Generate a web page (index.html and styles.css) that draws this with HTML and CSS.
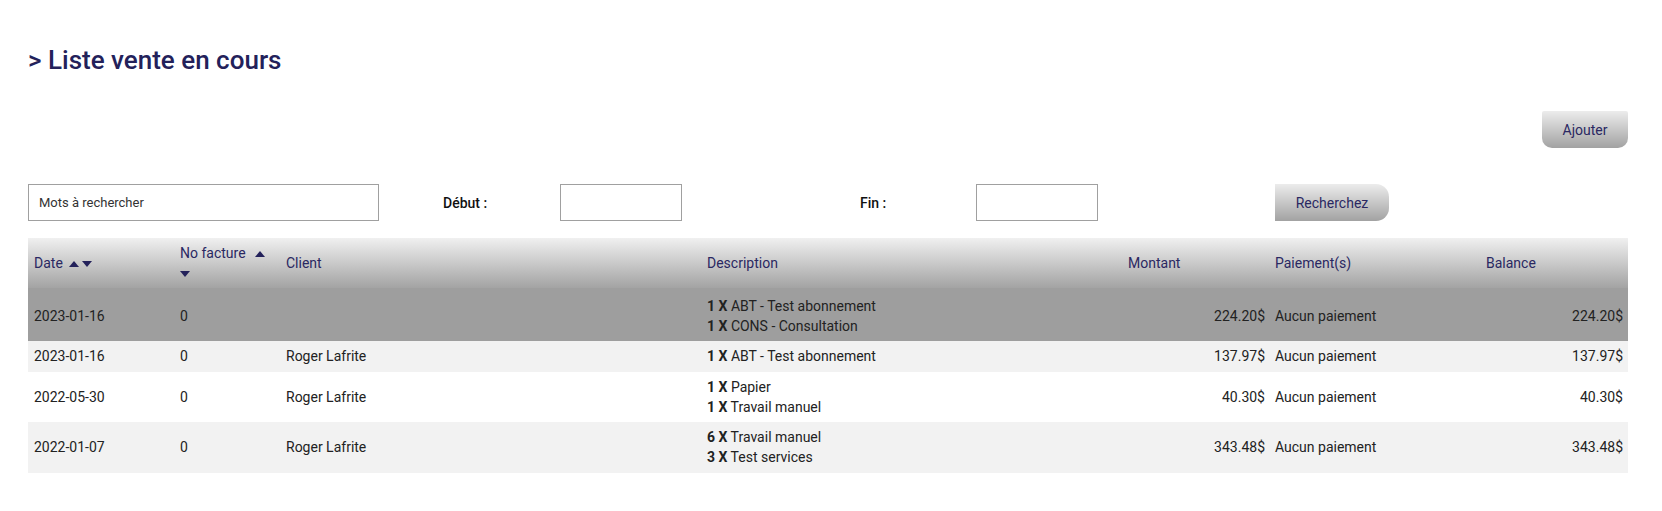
FILE: index.html
```html
<!DOCTYPE html>
<html lang="fr">
<head>
  <meta charset="UTF-8" />
  <meta name="viewport" content="width=device-width, initial-scale=1.0"/>
  <title>Liste vente en cours</title>
  <link rel="stylesheet" href="styles.css">
</head>
<body>
<div class="page">

  <h1>&gt; Liste vente en cours</h1>

  <div class="actions">
    <button class="btn btn-add">Ajouter</button>
  </div>

  <!-- Filtres -->
  <div class="filters">
    <input type="text" class="search" placeholder="Mots à rechercher" />
    <label class="lbl">Début :</label>
    <input type="text" class="date-input" />
    <label class="lbl">Fin :</label>
    <input type="text" class="date-input" />
    <div><button class="btn btn-search">Recherchez</button></div>
  </div>

  <!-- Ventes -->
  <table class="sales">
    <colgroup>
      <col style="width:146px">
      <col style="width:106px">
      <col style="width:421px">
      <col style="width:421px">
      <col style="width:147px">
      <col style="width:211px">
      <col style="width:148px">
    </colgroup>
    <thead>
      <tr>
        <th>Date <span class="sort"><svg width="10" height="6" viewBox="0 0 10 6"><polygon points="0,6 5,0 10,6"/></svg><svg width="10" height="6" viewBox="0 0 10 6"><polygon points="0,0 10,0 5,6"/></svg></span></th>
        <th>No facture <span class="sort up"><svg width="10" height="6" viewBox="0 0 10 6"><polygon points="0,6 5,0 10,6"/></svg></span><br><span class="sort down"><svg width="10" height="6" viewBox="0 0 10 6"><polygon points="0,0 10,0 5,6"/></svg></span></th>
        <th>Client</th>
        <th>Description</th>
        <th>Montant</th>
        <th>Paiement(s)</th>
        <th>Balance</th>
      </tr>
    </thead>
    <tbody>
      <tr class="hover">
        <td>2023-01-16</td>
        <td>0</td>
        <td></td>
        <td><b>1 X</b> ABT - Test abonnement<br><b>1 X</b> CONS - Consultation</td>
        <td class="num">224.20$</td>
        <td>Aucun paiement</td>
        <td class="num">224.20$</td>
      </tr>
      <tr>
        <td>2023-01-16</td>
        <td>0</td>
        <td>Roger Lafrite</td>
        <td><b>1 X</b> ABT - Test abonnement</td>
        <td class="num">137.97$</td>
        <td>Aucun paiement</td>
        <td class="num">137.97$</td>
      </tr>
      <tr>
        <td>2022-05-30</td>
        <td>0</td>
        <td>Roger Lafrite</td>
        <td><b>1 X</b> Papier<br><b>1 X</b> Travail manuel</td>
        <td class="num">40.30$</td>
        <td>Aucun paiement</td>
        <td class="num">40.30$</td>
      </tr>
      <tr>
        <td>2022-01-07</td>
        <td>0</td>
        <td>Roger Lafrite</td>
        <td><b>6 X</b> Travail manuel<br><b>3 X</b> Test services</td>
        <td class="num">343.48$</td>
        <td>Aucun paiement</td>
        <td class="num">343.48$</td>
      </tr>
    </tbody>
  </table>

</div>
</body>
</html>
```

FILE: styles.css
```css
body {
  margin: 0;
  font-family: Roboto, "Liberation Sans", Arial, sans-serif;
  font-size: 14px;
  color: #222;
  background: #fff;
}

.page {
  padding: 0 34px 40px 28px;
}

h1 {
  margin: 45px 0 0;
  font-size: 26px;
  line-height: 30px;
  font-weight: 500;
  color: #23215a;
}

.actions {
  display: flex;
  justify-content: flex-end;
  margin-top: 36px;
}

.btn {
  font-family: inherit;
  font-size: 14px;
  color: #2a2862;
  border: none;
  background: linear-gradient(#ececec, #a2a2a2);
  cursor: pointer;
  height: 37px;
}

.btn-add {
  width: 86px;
  border-radius: 2px 2px 10px 10px;
}

.btn-search {
  width: 114px;
  border-radius: 0 13px 13px 0;
}

.filters {
  display: grid;
  grid-template-columns: 415px 117px 300px 116px 299px auto;
  align-items: center;
  margin-top: 36px;
}

.filters input {
  height: 37px;
  box-sizing: border-box;
  border: 1px solid #a0a0a0;
  font-family: inherit;
  font-size: 13px;
  padding: 0 10px;
}

.search {
  width: 351px;
}

.search::placeholder {
  color: #333;
}

.date-input {
  width: 122px;
}

.lbl {
  font-weight: 500;
  font-size: 14px;
  color: #111;
}

.sales {
  width: 1600px;
  margin-top: 17px;
  border-collapse: collapse;
  table-layout: fixed;
}

.sales th {
  background: linear-gradient(#f0f0f0, #a3a3a3);
  color: #2a2862;
  font-weight: 400;
  text-align: left;
  line-height: 20px;
  padding: 5px 4px 5px 6px;
  vertical-align: middle;
}

.sales td {
  line-height: 20px;
  padding: 5px 4px 5px 6px;
  vertical-align: middle;
}

.sales td b {
  font-weight: 700;
}

.sales tbody tr:nth-child(even) {
  background: #f2f2f2;
}

.sales tbody tr.hover {
  background: #9e9e9e;
}

.sales tbody tr.hover td {
  padding-top: 8px;
}

.sales tbody tr:not(.hover) td {
  padding-bottom: 5.5px;
}

.sales td.num {
  text-align: right;
}

.sales td:last-child {
  padding-right: 5px;
}

.sort svg {
  fill: #23215a;
  margin-left: 3px;
  vertical-align: 1px;
}

.sort.up svg {
  margin-left: 6px;
}

.sort.down svg {
  margin-left: 0;
}
```
